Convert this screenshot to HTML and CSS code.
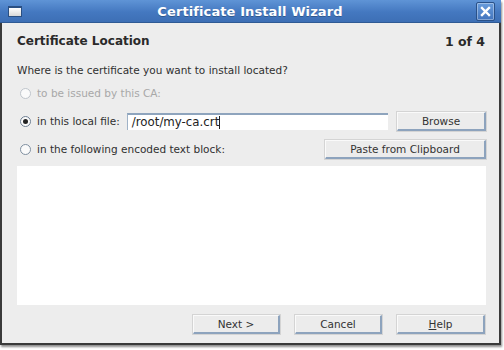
FILE: index.html
```html
<!DOCTYPE html>
<html>
<head>
<meta charset="utf-8">
<link rel="stylesheet" href="styles.css">
</head>
<body>
<div class="window">
  <div class="titlebar">
    <span class="winicon"></span>
    <span class="title">Certificate Install Wizard</span>
    <span class="close"><svg width="11" height="11" viewBox="0 0 11 11"><path d="M2 2 L9 9 M9 2 L2 9" stroke="#fff" stroke-width="2.4" stroke-linecap="square"/></svg></span>
  </div>
  <div class="body">
    <div class="header">
      <span class="heading">Certificate Location</span>
      <span class="step">1 of 4</span>
    </div>
    <div class="question">Where is the certificate you want to install located?</div>
    <div class="row disabled">
      <span class="radio"></span>
      <span class="label">to be issued by this CA:</span>
    </div>
    <div class="row">
      <span class="radio checked"></span>
      <span class="label">in this local file:</span>
      <span class="input">/root/my-ca.crt<span class="caret"></span></span>
      <span class="btn browse">Browse</span>
    </div>
    <div class="row">
      <span class="radio"></span>
      <span class="label">in the following encoded text block:</span>
      <span class="spacer"></span>
      <span class="btn paste">Paste from Clipboard</span>
    </div>
    <div class="textarea"></div>
    <div class="footer">
      <span class="btn">Next &gt;</span>
      <span class="btn">Cancel</span>
      <span class="btn"><u>H</u>elp</span>
    </div>
  </div>
</div>
</body>
</html>
```
FILE: styles.css
```css
html, body {
  margin: 0;
  padding: 0;
  background: #ffffff;
  width: 504px;
  height: 350px;
  overflow: hidden;
}
.window {
  width: 497px;
  height: 343px;
  border: 2px solid #3a3a3a;
  border-top: none;
  box-shadow: 1px 2px 2px rgba(0,0,0,0.45);
  background: #ededed;
  display: flex;
  flex-direction: column;
  font-family: "DejaVu Sans", sans-serif;
  color: #2e2e2e;
}
.titlebar {
  height: 22px;
  margin: 0 -2px;
  background: linear-gradient(#5f94d6, #4478c0 55%, #3d6fb5);
  border-bottom: 1px solid #2f5a94;
  display: flex;
  align-items: center;
  position: relative;
}
.winicon {
  width: 12px;
  height: 8px;
  margin-left: 8px;
  border: 1px solid #2a4f82;
  border-top-width: 2px;
  background: linear-gradient(#ffffff, #d8d8d8);
}
.title {
  flex: 1;
  text-align: center;
  font-weight: bold;
  font-size: 13px;
  color: #ffffff;
  letter-spacing: 0.1px;
  margin-left: 2px;
  text-shadow: 0 1px 0 rgba(0,0,0,0.25);
}
.close {
  width: 17px;
  height: 17px;
  margin-right: 6px;
  border: 1px solid #2a5188;
  border-radius: 2px;
  background: linear-gradient(#6a9ddc, #4274bd);
  display: flex;
  align-items: center;
  justify-content: center;
  box-shadow: inset 0 0 0 1px rgba(255,255,255,0.35);
}
.body {
  flex: 1;
  padding: 8px 13px 0 15px;
  display: flex;
  flex-direction: column;
  font-size: 10.5px;
}
.header {
  display: flex;
  justify-content: space-between;
  align-items: center;
  height: 20px;
  font-weight: bold;
  font-size: 12px;
  color: #2a2a2a;
}
.step { padding-right: 1px; font-size: 12.5px; }
.question {
  margin-top: 12px;
  height: 14px;
  line-height: 14px;
  color: #303030;
}
.row {
  display: flex;
  align-items: center;
  height: 20px;
  margin-top: 8px;
}
.question + .row { margin-top: 6px; }
.radio {
  width: 11px;
  height: 11px;
  border: 1px solid #7f8fa0;
  border-radius: 50%;
  background: #fafafa;
  margin-left: 3px;
  margin-right: 6px;
  box-sizing: border-box;
  position: relative;
}
.radio.checked {
  border-color: #6d7e92;
}
.radio.checked::after {
  content: "";
  position: absolute;
  left: 2px;
  top: 2px;
  width: 5px;
  height: 5px;
  border-radius: 50%;
  background: #222;
}
.disabled .radio { border-color: #bfc5cc; }
.disabled .label { color: #a8a8a8; }
.label { color: #303030; white-space: nowrap; }
.input {
  margin-left: 7px;
  width: 261px;
  height: 17px;
  background: #fff;
  border-top: 2px solid #8ea4bd;
  border-left: 1px solid #9fb2c7;
  box-sizing: border-box;
  padding-left: 4px;
  font-size: 11.8px;
  line-height: 15px;
  color: #222;
  display: flex;
  align-items: center;
}
.caret {
  display: inline-block;
  width: 1px;
  height: 13px;
  background: #222;
}
.spacer { flex: 1; }
.btn {
  height: 19px;
  box-sizing: border-box;
  border-right: 2px solid #8da3bd;
  border-bottom: 2px solid #8da3bd;
  border-top: 1px solid #fafafa;
  border-left: 1px solid #fafafa;
  background: #ececec;
  box-shadow: 0 0 0 1px #d4d4d4;
  display: flex;
  align-items: center;
  justify-content: center;
  font-size: 10.5px;
  color: #333;
  white-space: nowrap;
}
.browse {
  width: 89px;
  margin-left: auto;
}
.paste {
  width: 161px;
}
.textarea {
  margin-top: 7px;
  height: 139px;
  background: #ffffff;
}
.footer {
  display: flex;
  justify-content: flex-end;
  gap: 15px;
  margin-top: 10px;
  padding-right: 1px;
}
.footer .btn { width: 87px; height: 19px; }
.footer .btn:last-child { width: 88px; }
```
